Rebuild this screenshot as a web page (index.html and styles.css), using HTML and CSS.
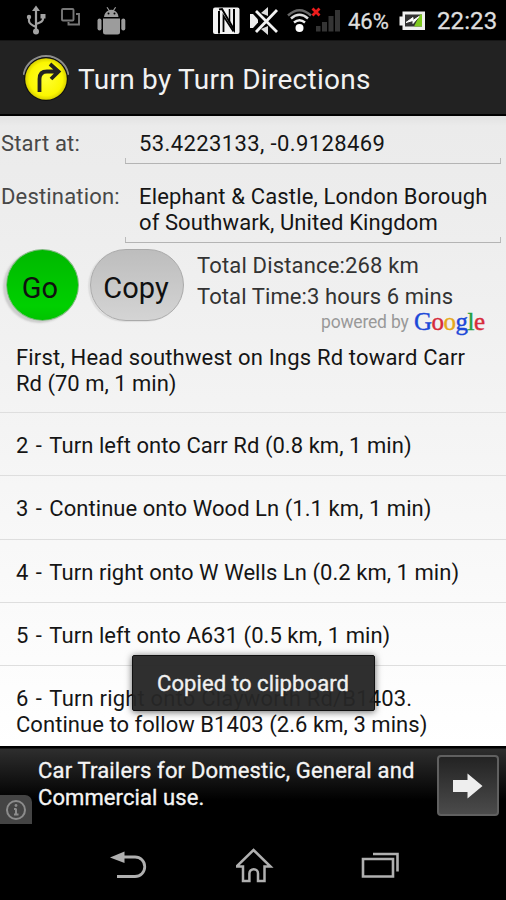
FILE: index.html
```html
<!DOCTYPE html>
<html lang="en">
<head>
<meta charset="utf-8">
<title>Turn by Turn Directions</title>
<link rel="stylesheet" href="styles.css">
</head>
<body>
<div class="phone">
  <div class="status">
    <svg class="status-left" width="130" height="40" viewBox="0 0 130 40">
      <g stroke="#a3a3a3" fill="none" stroke-width="2.200">
        <path d="M36 9V31M29 17v4q0 3 7 6M43 15v4q0 3-7 5"/>
        <path d="M36 5.500l4 5.500h-8z" fill="#a3a3a3" stroke="none"/>
        <circle cx="36" cy="31.500" r="3" fill="#a3a3a3" stroke="none"/>
        <circle cx="29" cy="17" r="2.200" fill="#a3a3a3" stroke="none"/>
        <path d="M40.500 14h5v4.500h-5z" fill="#a3a3a3" stroke="none"/>
      </g>
      <g stroke="#777" fill="none" stroke-width="1.900">
        <rect x="62" y="9" width="11.500" height="11.500" rx="1"/>
        <path d="M76 14h3v10.500H68.500V22"/>
      </g>
      <g fill="#9c9c9c">
        <path d="M104 17q.5-5 4.500-6.500l-2-3 1-.5 2 3q1.700-.5 3.600 0l2-3 1 .5-2 3q4 1.500 4.400 6.500z"/>
        <path d="M103 18.500h17V32q0 2.500-2.500 2.500h-12Q103 34.500 103 32z"/>
        <rect x="97.500" y="18.500" width="4" height="12" rx="2"/>
        <rect x="121.300" y="18.500" width="4" height="12" rx="2"/>
        <circle cx="108.500" cy="13.500" r="1" fill="#000"/><circle cx="114.500" cy="13.500" r="1" fill="#000"/>
      </g>
    </svg>
    <svg class="status-right" width="132" height="40" viewBox="210 0 132 40">
      <rect x="213" y="7.500" width="26.500" height="26.500" rx="2" fill="#f2f2f2"/>
      <g fill="none" stroke="#000">
        <path d="M219 33.500V11" stroke-width="2"/>
        <path d="M219 9.500l3-.5 12 20.500V9" stroke-width="2"/>
        <path d="M223.500 32V16l10 15.500" stroke-width="1.800"/>
        <path d="M229.500 9v13" stroke-width="1.500"/>
      </g>
      <path d="M250 14h3l5 5.500v3l-5 5.500h-3z" fill="#eee"/>
      <path d="M261 13l7-6v9zM261 29l7 6v-9z" fill="#ddd"/>
      <path d="M256 11l21 21M277 10l-21 22" stroke="#f2f2f2" stroke-width="2.800"/>
      <g fill="none" stroke-width="2.500">
        <path d="M288 15.500q11.500-10.500 23 0" stroke="#666"/>
        <path d="M291 18.500q8.500-7.500 17 0" stroke="#ddd"/>
        <path d="M294 22.500q5.500-4.500 11 0" stroke="#eee"/>
      </g>
      <circle cx="299.500" cy="28" r="4" fill="#fff"/>
      <path d="M312.500 8.500l7 7M319.500 8.500l-7 7" stroke="#ed1c1c" stroke-width="2.800"/>
      <g fill="#343434">
        <rect x="316" y="26" width="4.500" height="5.500"/><rect x="322" y="22" width="5" height="9.500"/>
        <rect x="328.500" y="16" width="5" height="15.500"/><rect x="335" y="10" width="5" height="21.500"/>
      </g>
    </svg>
    <span class="pct">46%</span>
    <svg class="battery" width="26" height="20" viewBox="398 11 26 20">
      <path d="M398.500 16.500h3v-5h22.500v18.500h-22.500v-4.500h-3z" fill="#f0f0f0"/>
      <rect x="404" y="14.500" width="17" height="12" fill="#333"/>
      <path d="M413 26.500l6-12h2v12z" fill="#7fc91f"/>
      <path d="M405 22.500l7-5v3l6-4-6 7v-3z" fill="#fff" stroke="#fff"/>
    </svg>
    <span class="clock">22:23</span>
  </div>

  <header class="bar">
    <svg class="logo" width="46" height="50" viewBox="0 0 46 50">
      <defs>
        <radialGradient id="sun"><stop offset="0" stop-color="#ffff30"/><stop offset=".8" stop-color="#fbf600"/><stop offset="1" stop-color="#d8d000"/></radialGradient>
      </defs>
      <path d="M.8 22A22.500 22.500 0 0 1 45.200 22" fill="none" stroke="#8d8d8d" stroke-width="2.400"/>
      <circle cx="23" cy="26" r="22" fill="#111"/>
      <circle cx="23" cy="26" r="20.800" fill="url(#sun)"/>
      <path d="M16.500 39V26q0-7.500 7.500-7.500h10M27 11l8.500 7.500L28 26" fill="none" stroke="#222" stroke-width="3.800"/>
    </svg>
    <h1 class="title">Turn by Turn Directions</h1>
  </header>

  <main class="content">
    <div class="form">
      <label class="label">Start at:</label>
      <div class="field"><span class="coords">53.4223133, -0.9128469</span></div>
      <label class="label">Destination:</label>
      <div class="field tall"><span class="ls16">Elephant &amp; Castle, London Borough</span><br><span class="ls10">of Southwark, United Kingdom</span></div>
    </div>
    <div class="actions">
      <button class="btn go">Go</button>
      <button class="btn copy">Copy</button>
      <div class="totals">
        <div><span class="ls16">Total Distance:268 km</span></div>
        <div><span class="ls10">Total Time:3 hours 6 mins</span></div>
        <div class="powered"><span class="by">powered by</span><span class="google"><i class="blue">G</i><i class="red">o</i><i class="gold">o</i><i class="blue">g</i><i class="green">l</i><i class="red">e</i></span></div>
      </div>
    </div>
    <ul class="steps">
      <li class="first"><span class="ls18">First, Head southwest on Ings Rd toward Carr</span><br><span>Rd (70 m, 1 min)</span></li>
      <li><span class="ls05"><b class="num">2 - </b>Turn left onto Carr Rd (0.8 km, 1 min)</span></li>
      <li><span class="ls05"><b class="num">3 - </b>Continue onto Wood Ln (1.1 km, 1 min)</span></li>
      <li><span class="ls05"><b class="num">4 - </b>Turn right onto W Wells Ln (0.2 km, 1 min)</span></li>
      <li><span class="ls05"><b class="num">5 - </b>Turn left onto A631 (0.5 km, 1 min)</span></li>
      <li class="last"><span class="ls18"><b class="num">6 - </b>Turn right onto Clayworth Rd/B1403.</span><br><span class="ls05">Continue to follow B1403 (2.6 km, 3 mins)</span></li>
    </ul>
    <div class="toast">Copied to clipboard</div>
  </main>

  <aside class="ad">
    <div class="info"><svg width="22" height="22" viewBox="0 0 22 22"><g fill="none" stroke="#8c8c8c"><circle cx="11" cy="11" r="9" stroke-width="2"/><path d="M11 9.500v6M9 10h2M9 15.500h4.500" stroke-width="2"/></g><circle cx="11" cy="6.500" r="1.400" fill="#8c8c8c"/></svg></div>
    <p class="adtext"><span class="ls18">Car Trailers for Domestic, General and</span><br><span class="ls10">Commercial use.</span></p>
    <div class="arrow"><svg width="30" height="26" viewBox="0 0 30 26"><path d="M0 7h14.500V0.500L29.500 13 14.500 25.500V19H0z" fill="#eee"/></svg></div>
  </aside>

  <nav class="nav">
    <svg width="38" height="30" viewBox="110 851 38 30"><path d="M117 877.500h18a9.500 9.500 0 0 0 0-19.500h-12" fill="none" stroke="#b0b0b0" stroke-width="2.800"/><path d="M110 858.500l14.500-6v11.500z" fill="#b0b0b0"/></svg>
    <svg width="38" height="36" viewBox="236 844 38 36"><path d="M253.500 847l17 16.500h-6V878h-6.500v-7.500a4.300 4.300 0 0 0-8.600 0V878H243v-14.500h-6.500z" fill="none" stroke="#b0b0b0" stroke-width="2.500"/></svg>
    <svg width="38" height="28" viewBox="361 852 38 28"><path d="M363 860h30v17.500h-30zM373 855h24.500v17.500" fill="none" stroke="#b0b0b0" stroke-width="2.600"/></svg>
  </nav>
</div>
</body>
</html>
```
FILE: styles.css
```css
* { box-sizing: border-box; }
body { margin: 0; background: #000; font-family: Roboto, sans-serif; font-size: 22px; color: #151515; }
.phone { width: 506px; height: 900px; display: flex; flex-direction: column; overflow: hidden; }
span { white-space: nowrap; }
.ls05 { letter-spacing: .05px; }
.ls10 { letter-spacing: .1px; }
.ls16 { letter-spacing: .16px; }
.ls18 { letter-spacing: .18px; }
.coords { letter-spacing: .39px; }
.num { font-weight: 400; letter-spacing: 1px; }

.status { height: 40px; flex: none; display: flex; align-items: center; background: #000; color: #dedede; -webkit-text-stroke: .3px #dedede; }
.status-left { flex: none; margin-right: 80px; }
.status-right { flex: none; }
.pct { width: 51px; margin-left: 6px; font-size: 22px; margin-top: 2px; }
.battery { flex: none; margin-top: 1px; }
.clock { margin-left: 12px; font-size: 24px; letter-spacing: .1px; margin-top: 2px; }

.bar { height: 76px; flex: none; display: flex; align-items: center; padding-left: 23px; background: #222; border-bottom: 2px solid #000; border-top: 1px solid #161616; }
.title { margin: 3px 0 0 9px; font-size: 28px; font-weight: 400; letter-spacing: .27px; color: #f2f2f2; white-space: nowrap; }

.content { height: 630px; flex: none; position: relative; background: linear-gradient(#e2e2e2 0, #ebebeb 10px, #ededed 15%, #f3f3f3 45%, #fff 100%); }
.form { height: 127px; display: grid; grid-template-columns: 125px 376px; grid-template-rows: 48px 79px; }
.label { padding: 15px 0 0 1px; line-height: 26px; letter-spacing: .17px; color: #484848; }
.field { padding: 15px 0 0 14px; line-height: 26px; background: linear-gradient(#b4b4b4, #b4b4b4) left bottom / 100% 1px no-repeat, linear-gradient(#bbb, #bbb) left bottom / 1px 6px no-repeat, linear-gradient(#bbb, #bbb) right bottom / 1px 6px no-repeat; }
.label:nth-of-type(2) { padding-top: 20px; }
.tall { padding-top: 20px; }

.actions { height: 93px; display: flex; padding: 6px 0 0 6px; }
.btn { flex: none; height: 72px; padding: 5px 0 0; border: 1px solid #aaa; font: 29px Roboto, sans-serif; color: #101010; }
.go { width: 73px; padding-right: 5px; border-color: #7fb87f; border-radius: 50%; background: linear-gradient(#00b800, #00d000 80%, #00c400); box-shadow: -3px 2px 2px #ccc; }
.copy { width: 94px; padding-right: 2px; margin-left: 11px; border-radius: 36px; background: linear-gradient(#bdbdbd, #d4d4d4); box-shadow: -2px 1px 1px #ddd; }
.totals { margin-left: 13px; padding-top: 2px; line-height: 30.500px; color: #333; }
.powered { display: flex; align-items: center; height: 24px; margin-left: 124px; margin-top: -2px; }
.by { font-size: 17.500px; letter-spacing: -.2px; color: #999; width: 93px; }
.google { font-family: "Liberation Serif", serif; font-size: 25px; line-height: 24px; letter-spacing: -.5px; -webkit-text-stroke: .4px; }
.google i { font-style: normal; }
.blue { color: #1c48d8; }
.red { color: #d62b3a; }
.gold { color: #e6a91c; }
.green { color: #23a03c; }

.steps { list-style: none; margin: 0; padding: 0; line-height: 25.700px; }
.steps li { height: 63.200px; padding: 20px 0 0 16px; border-bottom: 1px solid #dedede; }
.steps .first { height: 77.200px; padding-top: 9px; }
.steps .last { height: 80px; border: 0; }
.toast { position: absolute; left: 132px; top: 539px; width: 243px; height: 56px; padding-left: 24px; line-height: 56px; background: rgba(38, 38, 38, .96); border: 1px solid #111; border-radius: 2px; box-shadow: 0 1px 7px rgba(0, 0, 0, .6); color: #f0f0f0; letter-spacing: .1px; -webkit-text-stroke: .35px #f0f0f0; white-space: nowrap; }

.ad { height: 78px; flex: none; display: flex; background: linear-gradient(#000 0, #000 2px, #2e2e2e 3px, #000 70%); color: #f4f4f4; -webkit-text-stroke: .35px #f4f4f4; }
.info { width: 32px; height: 29px; margin-top: 49px; padding: 4px 0 0 5px; background: #444; border-radius: 0 7px 0 0; }
.info svg { display: block; }
.adtext { width: 398px; margin: 0; padding: 11px 0 0 6px; line-height: 27px; }
.arrow { width: 62px; height: 61px; margin: 9px 0 0 7px; border: 2px solid #606060; border-radius: 4px; background: linear-gradient(#232323, #4b4b4b); display: flex; align-items: center; justify-content: center; }
.nav { flex: 1; display: flex; justify-content: space-between; align-items: center; padding: 6px 107px 0 110px; background: #000; }
```
